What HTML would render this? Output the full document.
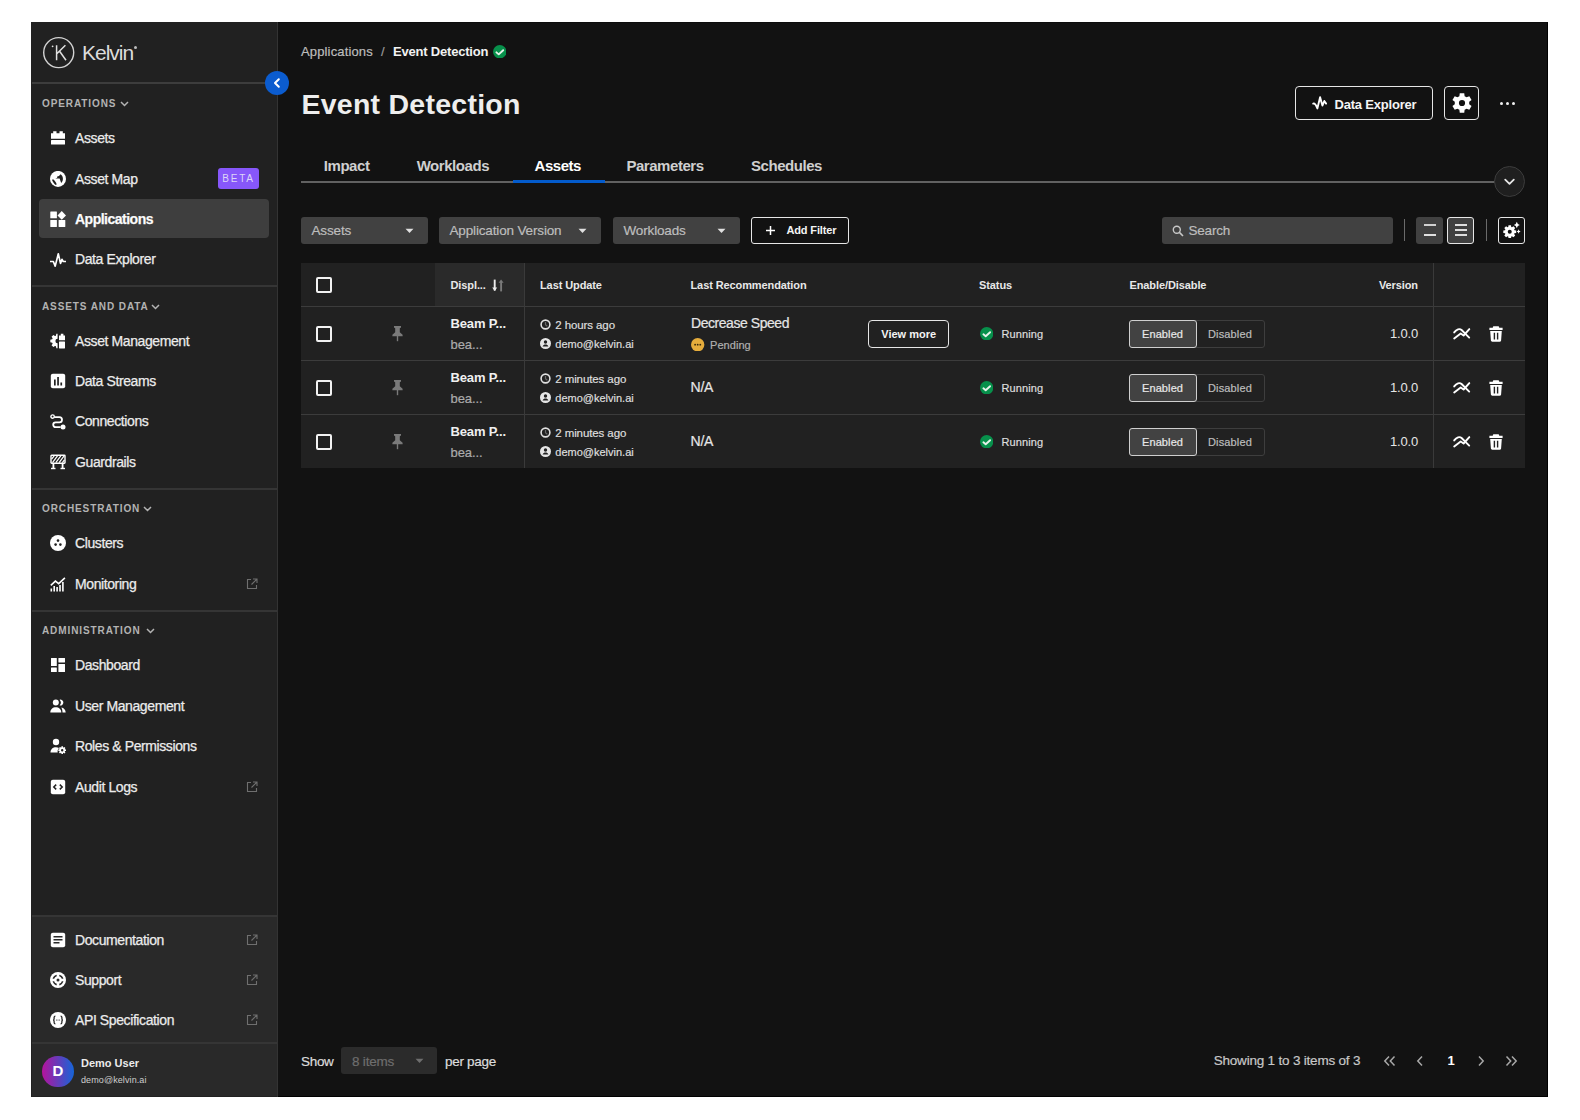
<!DOCTYPE html>
<html><head><meta charset="utf-8">
<style>
*{box-sizing:border-box;margin:0;padding:0}
html,body{width:1580px;height:1120px;background:#fff;overflow:hidden}
body{position:relative;font-family:"Liberation Sans",sans-serif;color:#e8e8e8}
.a{position:absolute}
#frame{position:absolute;left:31px;top:22px;width:1517px;height:1075px;background:#121212;border:1px solid #000;border-top-color:#0c0c0c;border-left-color:#0c0c0c}
#side{position:absolute;left:31px;top:22px;width:247px;height:1075px;background:#212121;border-right:1px solid #333}
#sidebot{position:absolute;left:32px;top:916px;width:245px;height:180px;background:#292929}
.hr{position:absolute;height:1px;background:#3a3a3a}
.sec{position:absolute;left:42px;font-size:10px;font-weight:700;letter-spacing:0.9px;color:#b3b3b3;line-height:1;white-space:nowrap}
.sec svg{position:absolute;top:1.5px}
.item{position:absolute;left:75px;font-size:14px;color:#ececec;line-height:1;letter-spacing:-0.4px;white-space:nowrap;-webkit-text-stroke:0.25px #ececec}
.ico{position:absolute;left:50px;width:16px;height:16px}
.ext{position:absolute;left:246px;width:12px;height:12px}
.t{position:absolute;white-space:nowrap;line-height:1}
</style></head><body>
<div id="frame"></div>
<div id="side"></div>
<div id="sidebot"></div>

<!-- logo -->
<svg class="a" style="left:42px;top:36px" width="34" height="34" viewBox="0 0 34 34"><circle cx="16.7" cy="16.6" r="15" fill="none" stroke="#d2d2d2" stroke-width="1.4"/><path d="M14.6 9.2v15M23.4 9.2l-8.6 8.6M17.6 15.2l6.4 9" stroke="#e0e0e0" stroke-width="1.5" fill="none"/><circle cx="10.6" cy="10.3" r="0.9" fill="#e0e0e0"/></svg>
<div class="t" style="left:82px;top:42px;font-size:21px;color:#dcdcdc;letter-spacing:-1px">Kelvin</div>
<div class="a" style="left:133.5px;top:45.5px;width:3.5px;height:3.5px;border-radius:50%;background:#bbb"></div>
<div class="hr" style="left:32px;top:82px;width:245px;height:2px;background:#3d3d3d"></div>
<!-- collapse btn -->
<div class="a" style="left:265px;top:71px;width:24px;height:24px;border-radius:50%;background:#0b5ccf"></div>
<svg class="a" style="left:265px;top:71px" width="24" height="24" viewBox="0 0 24 24"><path d="M13.8 8.2L10 12l3.8 3.8" stroke="#fff" stroke-width="2" fill="none" stroke-linecap="round" stroke-linejoin="round"/></svg>

<div id="sidenav">
<div class="a" style="left:39px;top:199px;width:230px;height:39px;border-radius:4px;background:#3e3e3e"></div>
<svg class="ico" style="top:130px" viewBox="0 0 16 16" fill="#fff"><path d="M1 3.2h2.2V1.2h3.3v2h3v-2h3.3v2H15v5.6H1z"/><rect x="1" y="10" width="14" height="4.6" rx="0.6"/></svg>
<div class="item" style="top:131px">Assets</div>
<svg class="ico" style="top:170.5px" viewBox="0 0 16 16" fill="#fff"><circle cx="8" cy="7.9" r="8"/><ellipse cx="4.4" cy="11.1" rx="1.05" ry="3.3" transform="rotate(-36 4.4 11.1)" fill="#212121"/><path d="M5.3 7.4h4.3l1.6 4.5c1.2-1.2 1.8-2.6 1.7-4.4-.1-2-1-3.4-2.4-4.2L9 4.9 7.2 5.5v1.3z" fill="#212121"/></svg>
<div class="item" style="top:172px">Asset Map</div>
<svg class="ico" style="top:210.5px" viewBox="0 0 16 16" fill="#fff"><rect x="0.3" y="0.6" width="6.6" height="6.7" rx="0.3"/><rect x="0.3" y="8.9" width="6.6" height="7" rx="0.3"/><rect x="8.6" y="8.9" width="6.7" height="7" rx="0.3"/><path d="M11.75 0.1L16 4.4 11.75 8.7 7.5 4.4z"/></svg>
<div class="item" style="top:212px;font-weight:700;letter-spacing:-0.5px;color:#fff">Applications</div>
<svg class="ico" style="top:251.5px" viewBox="0 0 16 16" fill="#fff"><path d="M0.5 9.5h2.8l1.9 4.6L8.3 1.8l2.2 9.6 1.5-4 1.2 2.1h2.4" fill="none" stroke="#fff" stroke-width="1.7" stroke-linejoin="round" stroke-linecap="round"/></svg>
<div class="item" style="top:252px">Data Explorer</div>
<svg class="ico" style="top:333px" viewBox="0 0 16 16" fill="#fff"><defs><clipPath id="hc"><rect x="0" y="0" width="7.6" height="16"/></clipPath></defs><path clip-path="url(#hc)" fill-rule="evenodd" d="M9.24 2.64 L8.88 0.71 L6.32 0.71 L5.96 2.64 L4.97 3.06 L3.36 1.94 L1.54 3.76 L2.66 5.37 L2.24 6.36 L0.31 6.72 L0.31 9.28 L2.24 9.64 L2.66 10.63 L1.54 12.24 L3.36 14.06 L4.97 12.94 L5.96 13.36 L6.32 15.29 L8.88 15.29 L9.24 13.36 L10.23 12.94 L11.84 14.06 L13.66 12.24 L12.54 10.63 L12.96 9.64 L14.89 9.28 L14.89 6.72 L12.96 6.36 L12.54 5.37 L13.66 3.76 L11.84 1.94 L10.23 3.06Z M9.8 8 A2.2 2.2 0 1 0 5.3999999999999995 8 A2.2 2.2 0 1 0 9.8 8Z"/><path d="M9 2.6h1.8V0.8h2.6v1.8H15v4.6H9z"/><rect x="9" y="8.6" width="6" height="6.8" rx="0.4"/></svg>
<div class="item" style="top:334px">Asset Management</div>
<svg class="ico" style="top:373.3px" viewBox="0 0 16 16" fill="#fff"><rect x="0.8" y="0.8" width="14.4" height="14.4" rx="2"/><rect x="4" y="6.5" width="1.7" height="6" fill="#212121"/><rect x="7.2" y="4" width="1.7" height="8.5" fill="#212121"/><rect x="10.4" y="9.5" width="1.7" height="3" fill="#212121"/></svg>
<div class="item" style="top:374px">Data Streams</div>
<svg class="ico" style="top:413.5px" viewBox="0 0 16 16" fill="#fff"><circle cx="2.6" cy="2.6" r="1.7" fill="none" stroke="#fff" stroke-width="1.4"/><circle cx="13" cy="13" r="2.5"/><path d="M4.2 3.2h5.2a2.6 2.6 0 0 1 0 5.2H5.6a2.4 2.4 0 0 0 0 4.8h5" fill="none" stroke="#fff" stroke-width="1.8"/></svg>
<div class="item" style="top:414px">Connections</div>
<svg class="ico" style="top:454px" viewBox="0 0 16 16" fill="#fff"><rect x="1" y="1.2" width="14" height="8" rx="0.6" fill="none" stroke="#fff" stroke-width="1.4"/><path d="M2.5 8.6l5-6.8M5.8 8.6l5-6.8M9.1 8.6l5-6.8M1.6 5.2l2.6-3.4M12.4 8.6l2-2.8" stroke="#fff" stroke-width="1.2"/><rect x="2.5" y="9" width="1.8" height="6"/><rect x="11.7" y="9" width="1.8" height="6"/><rect x="1" y="13.8" width="4.5" height="1.4"/><rect x="10.5" y="13.8" width="4.5" height="1.4"/></svg>
<div class="item" style="top:455px">Guardrails</div>
<svg class="ico" style="top:535px" viewBox="0 0 16 16" fill="#fff"><circle cx="8" cy="8" r="8"/><circle cx="8" cy="5.6" r="1.3" fill="#212121"/><circle cx="5.6" cy="9.6" r="1.3" fill="#212121"/><circle cx="10.4" cy="9.6" r="1.3" fill="#212121"/></svg>
<div class="item" style="top:536px">Clusters</div>
<svg class="ico" style="top:575.7px" viewBox="0 0 16 16" fill="#fff"><path d="M0.8 9.4l4.6-4.3 3.3 2.6 6.2-5.8" fill="none" stroke="#fff" stroke-width="1.6"/><rect x="0.5" y="12.5" width="1.6" height="3"/><rect x="3.4" y="10" width="1.6" height="5.5"/><rect x="6.3" y="11" width="1.6" height="4.5"/><rect x="9.2" y="9" width="1.6" height="6.5"/><rect x="12.1" y="6" width="1.6" height="9.5"/></svg>
<div class="item" style="top:577px">Monitoring</div>
<svg class="ext" style="top:577.7px" width="12" height="12" viewBox="0 0 12 12"><path d="M5 1.5H1.5v9h9V7" fill="none" stroke="#6f6f6f" stroke-width="1.1"/><path d="M7 1h4v4M11 1L5.5 6.5" fill="none" stroke="#6f6f6f" stroke-width="1.1"/></svg>
<svg class="ico" style="top:657.4px" viewBox="0 0 16 16" fill="#fff"><rect x="1" y="1" width="5.8" height="8" rx="0.3"/><rect x="1" y="10.6" width="5.8" height="4.4" rx="0.3"/><rect x="8.4" y="1" width="6.6" height="4.4" rx="0.3"/><rect x="8.4" y="7" width="6.6" height="8" rx="0.3"/></svg>
<div class="item" style="top:658px">Dashboard</div>
<svg class="ico" style="top:697.9px" viewBox="0 0 16 16" fill="#fff"><circle cx="5.8" cy="4.6" r="3"/><path d="M0.3 14.6c0-3.3 2.4-5.3 5.5-5.3s5.5 2 5.5 5.3z"/><path d="M9.6 1.7a3 3 0 1 1 0 5.8 4.3 4.3 0 0 0 0-5.8zM11.4 9.5c2.5.5 4.3 2.2 4.3 5.1h-3.2c0-2-.4-3.6-1.1-5.1z"/></svg>
<div class="item" style="top:699px">User Management</div>
<svg class="ico" style="top:738.4px" viewBox="0 0 16 16" fill="#fff"><circle cx="6" cy="4" r="3.2"/><path d="M0.5 14.5c0-3.4 2.4-5.3 5.5-5.3 1.1 0 2.1.2 3 .7-.9.9-1.4 2.3-1.4 3.6 0 .3 0 .7.1 1z"/><path fill-rule="evenodd" d="M13.10 9.44 L12.94 8.37 L11.46 8.37 L11.30 9.44 L10.88 9.62 L10.02 8.97 L8.97 10.02 L9.62 10.88 L9.44 11.30 L8.37 11.46 L8.37 12.94 L9.44 13.10 L9.62 13.52 L8.97 14.38 L10.02 15.43 L10.88 14.78 L11.30 14.96 L11.46 16.03 L12.94 16.03 L13.10 14.96 L13.52 14.78 L14.38 15.43 L15.43 14.38 L14.78 13.52 L14.96 13.10 L16.03 12.94 L16.03 11.46 L14.96 11.30 L14.78 10.88 L15.43 10.02 L14.38 8.97 L13.52 9.62Z M13.399999999999999 12.2 A1.2 1.2 0 1 0 11.0 12.2 A1.2 1.2 0 1 0 13.399999999999999 12.2Z"/></svg>
<div class="item" style="top:739px">Roles &amp; Permissions</div>
<svg class="ico" style="top:778.8px" viewBox="0 0 16 16" fill="#fff"><rect x="0.8" y="0.8" width="14.4" height="14.4" rx="2"/><path d="M6.2 5.6L3.8 8l2.4 2.4M9.8 5.6L12.2 8l-2.4 2.4" fill="none" stroke="#212121" stroke-width="1.5"/></svg>
<div class="item" style="top:780px">Audit Logs</div>
<svg class="ext" style="top:780.8px" width="12" height="12" viewBox="0 0 12 12"><path d="M5 1.5H1.5v9h9V7" fill="none" stroke="#6f6f6f" stroke-width="1.1"/><path d="M7 1h4v4M11 1L5.5 6.5" fill="none" stroke="#6f6f6f" stroke-width="1.1"/></svg>
<svg class="ico" style="top:932px" viewBox="0 0 16 16" fill="#fff"><rect x="0.8" y="0.8" width="14.4" height="14.4" rx="2"/><rect x="3.5" y="4" width="9" height="1.5" fill="#292929"/><rect x="3.5" y="7" width="9" height="1.5" fill="#292929"/><rect x="3.5" y="10" width="6" height="1.5" fill="#292929"/></svg>
<div class="item" style="top:933px">Documentation</div>
<svg class="ext" style="top:934px" width="12" height="12" viewBox="0 0 12 12"><path d="M5 1.5H1.5v9h9V7" fill="none" stroke="#6f6f6f" stroke-width="1.1"/><path d="M7 1h4v4M11 1L5.5 6.5" fill="none" stroke="#6f6f6f" stroke-width="1.1"/></svg>
<svg class="ico" style="top:972px" viewBox="0 0 16 16" fill="#fff"><circle cx="8" cy="8" r="8"/><circle cx="8" cy="8" r="4.7" fill="none" stroke="#292929" stroke-width="1.7"/><path d="M8 1.5v13M1.5 8h13" stroke="#fff" stroke-width="2.6"/><circle cx="8" cy="8" r="1.5" fill="#292929"/></svg>
<div class="item" style="top:973px">Support</div>
<svg class="ext" style="top:974px" width="12" height="12" viewBox="0 0 12 12"><path d="M5 1.5H1.5v9h9V7" fill="none" stroke="#6f6f6f" stroke-width="1.1"/><path d="M7 1h4v4M11 1L5.5 6.5" fill="none" stroke="#6f6f6f" stroke-width="1.1"/></svg>
<svg class="ico" style="top:1012px" viewBox="0 0 16 16" fill="#fff"><circle cx="8" cy="8" r="8"/><path d="M5.4 4.2c-1.2 0-1.3.6-1.3 1.6v.9c0 .8-.4 1.3-1 1.3.6 0 1 .5 1 1.3v.9c0 1 .1 1.6 1.3 1.6M10.6 4.2c1.2 0 1.3.6 1.3 1.6v.9c0 .8.4 1.3 1 1.3-.6 0-1 .5-1 1.3v.9c0 1-.1 1.6-1.3 1.6" fill="none" stroke="#292929" stroke-width="1.3"/><circle cx="6.4" cy="8" r=".55" fill="#292929"/><circle cx="8" cy="8" r=".55" fill="#292929"/><circle cx="9.6" cy="8" r=".55" fill="#292929"/></svg>
<div class="item" style="top:1013px">API Specification</div>
<svg class="ext" style="top:1014px" width="12" height="12" viewBox="0 0 12 12"><path d="M5 1.5H1.5v9h9V7" fill="none" stroke="#6f6f6f" stroke-width="1.1"/><path d="M7 1h4v4M11 1L5.5 6.5" fill="none" stroke="#6f6f6f" stroke-width="1.1"/></svg>
<div class="a" style="left:218px;top:168px;width:41px;height:21px;border-radius:3px;background:#8757fa;color:#ddd5f7;font-size:10px;font-weight:400;letter-spacing:1.75px;line-height:22px;text-align:center;padding-left:0px">BETA</div>
<div class="sec" style="top:99px">OPERATIONS<svg width="9" height="6" viewBox="0 0 9 6" style="left:78px"><path d="M1 1l3.5 3.5L8 1" fill="none" stroke="#b3b3b3" stroke-width="1.5"/></svg></div>
<div class="sec" style="top:302px">ASSETS AND DATA<svg width="9" height="6" viewBox="0 0 9 6" style="left:109px"><path d="M1 1l3.5 3.5L8 1" fill="none" stroke="#b3b3b3" stroke-width="1.5"/></svg></div>
<div class="sec" style="top:504px">ORCHESTRATION<svg width="9" height="6" viewBox="0 0 9 6" style="left:101px"><path d="M1 1l3.5 3.5L8 1" fill="none" stroke="#b3b3b3" stroke-width="1.5"/></svg></div>
<div class="sec" style="top:626px">ADMINISTRATION<svg width="9" height="6" viewBox="0 0 9 6" style="left:104px"><path d="M1 1l3.5 3.5L8 1" fill="none" stroke="#b3b3b3" stroke-width="1.5"/></svg></div>
<div class="hr" style="left:32px;top:285px;width:245px;height:2px;background:#353535"></div>
<div class="hr" style="left:32px;top:488px;width:245px;height:2px;background:#353535"></div>
<div class="hr" style="left:32px;top:610px;width:245px;height:2px;background:#353535"></div>
<div class="hr" style="left:32px;top:915px;width:245px;height:2px;background:#353535"></div>
<div class="hr" style="left:32px;top:1042px;width:245px;height:2px;background:#353535"></div>
<div class="a" style="left:42.2px;top:1055.5px;width:31.5px;height:31.5px;border-radius:50%;background:linear-gradient(90deg,#b5139c,#1565d8)"></div>
<div class="t" style="left:42.2px;width:31.5px;text-align:center;top:1063px;font-size:15px;font-weight:700;color:#fff">D</div>
<div class="t" style="left:81px;top:1058px;font-size:11px;font-weight:700;color:#ececec;letter-spacing:0px">Demo User</div>
<div class="t" style="left:81px;top:1076px;font-size:9px;color:#cfcfcf;letter-spacing:0.1px">demo@kelvin.ai</div>
</div>

<div id="main">
<div class="t" style="left:301px;top:45px;font-size:13px;color:#bdbdbd;font-weight:400;letter-spacing:0.15px;-webkit-text-stroke:0.2px #bdbdbd;">Applications</div>
<div class="t" style="left:381px;top:45px;font-size:13px;color:#9a9a9a;font-weight:400;letter-spacing:0px;-webkit-text-stroke:0.2px #9a9a9a;">/</div>
<div class="t" style="left:393px;top:45px;font-size:13px;color:#f2f2f2;font-weight:700;letter-spacing:-0.2px;">Event Detection</div>
<svg class="a" style="left:492.9px;top:44.9px" width="13.5" height="13.5" viewBox="0 0 13.4 13.4"><circle cx="6.7" cy="6.7" r="6.7" fill="#07904b"/><path d="M3.4 7.3l2.3 2 4.4-4.1" fill="none" stroke="#e6f2ea" stroke-width="1.9" stroke-linecap="round" stroke-linejoin="round"/></svg>
<div class="t" style="left:301.5px;top:90px;font-size:28.5px;color:#eeeeee;font-weight:700;letter-spacing:0.25px;">Event Detection</div>
<div class="a" style="left:1295px;top:86px;width:138px;height:34px;border:1.5px solid #e6e6e6;border-radius:4px"></div>
<svg class="a" style="left:1311px;top:95px" width="17" height="17" viewBox="0 0 17 17"><path d="M2.2 8.6c1.6-.6 2.6.6 4.2 4.8L9.1 2.2l2.3 8.4 1.9-4.6 1.8 2.6" fill="none" stroke="#fff" stroke-width="1.9" stroke-linejoin="round" stroke-linecap="round"/></svg>
<div class="t" style="left:1334.5px;top:98px;font-size:13px;color:#f4f4f4;font-weight:700;letter-spacing:-0.2px;">Data Explorer</div>
<div class="a" style="left:1444px;top:86px;width:35px;height:34px;border:1.5px solid #e6e6e6;border-radius:4px"></div>
<svg class="a" style="left:1451.8px;top:93.4px" width="20" height="20" viewBox="0 0 20 20"><path fill="#fff" fill-rule="evenodd" d="M12.62 3.18 L12.25 0.26 L7.75 0.26 L7.38 3.18 L5.41 4.33 L2.69 3.18 L0.44 7.08 L2.79 8.86 L2.79 11.14 L0.44 12.92 L2.69 16.82 L5.41 15.67 L7.38 16.82 L7.75 19.74 L12.25 19.74 L12.62 16.82 L14.59 15.67 L17.31 16.82 L19.56 12.92 L17.21 11.14 L17.21 8.86 L19.56 7.08 L17.31 3.18 L14.59 4.33Z M13.1 10 A3.1 3.1 0 1 0 6.9 10 A3.1 3.1 0 1 0 13.1 10Z"/></svg>
<div class="a" style="left:1499.6px;top:101.6px;width:3.8px;height:3.8px;border-radius:50%;background:#f0f0f0"></div>
<div class="a" style="left:1505.6px;top:101.6px;width:3.8px;height:3.8px;border-radius:50%;background:#f0f0f0"></div>
<div class="a" style="left:1511.6px;top:101.6px;width:3.8px;height:3.8px;border-radius:50%;background:#f0f0f0"></div>
<div class="t" style="left:323.8px;top:158px;font-size:15px;color:#cfcfcf;font-weight:700;letter-spacing:-0.45px;">Impact</div>
<div class="t" style="left:416.7px;top:158px;font-size:15px;color:#cfcfcf;font-weight:700;letter-spacing:-0.45px;">Workloads</div>
<div class="t" style="left:534.5px;top:158px;font-size:15px;color:#ffffff;font-weight:700;letter-spacing:-0.45px;">Assets</div>
<div class="t" style="left:626.4px;top:158px;font-size:15px;color:#cfcfcf;font-weight:700;letter-spacing:-0.45px;">Parameters</div>
<div class="t" style="left:751px;top:158px;font-size:15px;color:#cfcfcf;font-weight:700;letter-spacing:-0.45px;">Schedules</div>
<div class="a" style="left:301px;top:181px;width:1194px;height:2px;background:#616161"></div>
<div class="a" style="left:513px;top:179.5px;width:92px;height:3px;background:#035bcc"></div>
<div class="a" style="left:1494px;top:166px;width:31px;height:31px;border-radius:50%;background:#1f1f1f;border:1px solid #3c3c3c"></div>
<svg class="a" style="left:1502px;top:175px" width="15" height="13" viewBox="0 0 15 13"><path d="M3.2 4.6l4.3 4.2 4.3-4.2" fill="none" stroke="#e6e6e6" stroke-width="1.8" stroke-linecap="round" stroke-linejoin="round"/></svg>
<div class="a" style="left:301px;top:217px;width:127px;height:27px;border-radius:3px;background:#414141"></div>
<div class="t" style="left:311.5px;top:224px;font-size:13.5px;color:#bdbdbd;font-weight:400;letter-spacing:-0.15px;-webkit-text-stroke:0.2px #bdbdbd;">Assets</div>
<svg class="a" style="left:404.5px;top:227.5px" width="9" height="6" viewBox="0 0 9 6"><path d="M0.5 0.8h8L4.5 5z" fill="#e0e0e0"/></svg>
<div class="a" style="left:439px;top:217px;width:162px;height:27px;border-radius:3px;background:#414141"></div>
<div class="t" style="left:449.5px;top:224px;font-size:13.5px;color:#bdbdbd;font-weight:400;letter-spacing:-0.15px;-webkit-text-stroke:0.2px #bdbdbd;">Application Version</div>
<svg class="a" style="left:577.5px;top:227.5px" width="9" height="6" viewBox="0 0 9 6"><path d="M0.5 0.8h8L4.5 5z" fill="#e0e0e0"/></svg>
<div class="a" style="left:613px;top:217px;width:127px;height:27px;border-radius:3px;background:#414141"></div>
<div class="t" style="left:623.5px;top:224px;font-size:13.5px;color:#bdbdbd;font-weight:400;letter-spacing:-0.15px;-webkit-text-stroke:0.2px #bdbdbd;">Workloads</div>
<svg class="a" style="left:716.5px;top:227.5px" width="9" height="6" viewBox="0 0 9 6"><path d="M0.5 0.8h8L4.5 5z" fill="#e0e0e0"/></svg>
<div class="a" style="left:751px;top:217px;width:98px;height:27px;border:1.5px solid #e6e6e6;border-radius:3px"></div>
<svg class="a" style="left:765px;top:225px" width="11" height="11" viewBox="0 0 11 11"><path d="M5.5 1v9M1 5.5h9" stroke="#fff" stroke-width="1.5"/></svg>
<div class="t" style="left:786.5px;top:225px;font-size:11px;color:#f4f4f4;font-weight:700;letter-spacing:-0.15px;">Add Filter</div>
<div class="a" style="left:1162px;top:217px;width:231px;height:27px;border-radius:3px;background:#414141"></div>
<svg class="a" style="left:1172px;top:224.5px" width="12" height="12" viewBox="0 0 12 12"><circle cx="4.8" cy="4.8" r="3.5" fill="none" stroke="#c8c8c8" stroke-width="1.4"/><path d="M7.4 7.4l3.6 3.6" stroke="#c8c8c8" stroke-width="1.6"/></svg>
<div class="t" style="left:1188.5px;top:224px;font-size:13.5px;color:#bdbdbd;font-weight:400;letter-spacing:-0.2px;-webkit-text-stroke:0.2px #bdbdbd;">Search</div>
<div class="a" style="left:1404px;top:219px;width:1px;height:22px;background:#6a6a6a"></div>
<div class="a" style="left:1416px;top:217px;width:27px;height:27px;border-radius:3px;background:#414141"></div>
<div class="a" style="left:1424px;top:224.1px;width:12px;height:2px;background:#d0d0d0"></div><div class="a" style="left:1424px;top:234.4px;width:12px;height:2px;background:#e0e0e0"></div>
<div class="a" style="left:1447px;top:216.7px;width:27px;height:27.2px;border-radius:3px;border:1.6px solid #e6e6e6;background:#404040"></div>
<div class="a" style="left:1455px;top:224.1px;width:12px;height:2px;background:#dedede"></div>
<div class="a" style="left:1455px;top:229.3px;width:12px;height:2px;background:#dedede"></div>
<div class="a" style="left:1455px;top:234.4px;width:12px;height:2px;background:#dedede"></div>
<div class="a" style="left:1486px;top:219px;width:1px;height:22px;background:#6a6a6a"></div>
<div class="a" style="left:1498px;top:217px;width:27px;height:27px;border-radius:3px;border:1.5px solid #e6e6e6"></div>
<svg class="a" style="left:1503.1px;top:224.8px" width="13.5" height="13.5" viewBox="0 0 14 14"><path fill="#fff" fill-rule="evenodd" d="M8.58 2.15 L8.30 0.32 L5.70 0.32 L5.42 2.15 L4.68 2.46 L3.20 1.36 L1.36 3.20 L2.46 4.68 L2.15 5.42 L0.32 5.70 L0.32 8.30 L2.15 8.58 L2.46 9.32 L1.36 10.80 L3.20 12.64 L4.68 11.54 L5.42 11.85 L5.70 13.68 L8.30 13.68 L8.58 11.85 L9.32 11.54 L10.80 12.64 L12.64 10.80 L11.54 9.32 L11.85 8.58 L13.68 8.30 L13.68 5.70 L11.85 5.42 L11.54 4.68 L12.64 3.20 L10.80 1.36 L9.32 2.46Z M9.1 7 A2.1 2.1 0 1 0 4.9 7 A2.1 2.1 0 1 0 9.1 7Z"/></svg><svg class="a" style="left:1513px;top:221px" width="8" height="14" viewBox="0 0 8 14"><path d="M3.8 0.8Q4.3 3.5 6.8 4 4.3 4.5 3.8 7.2 3.3 4.5 0.8 4 3.3 3.5 3.8 0.8z" fill="#fff"/><path d="M5.6 8.3Q5.9 10.2 7.6 10.5 5.9 10.8 5.6 12.7 5.3 10.8 3.6 10.5 5.3 10.2 5.6 8.3z" fill="#fff"/></svg>
<div class="a" style="left:301px;top:263px;width:1224px;height:205px;background:#212121"></div>
<div class="a" style="left:435px;top:263px;width:89px;height:43px;background:#2a2a2a"></div>
<div class="a" style="left:301px;top:306px;width:1224px;height:1px;background:#3c3c3c"></div>
<div class="a" style="left:301px;top:360px;width:1224px;height:1px;background:#3c3c3c"></div>
<div class="a" style="left:301px;top:414px;width:1224px;height:1px;background:#3c3c3c"></div>
<div class="a" style="left:523.5px;top:263px;width:1px;height:205px;background:#3a3a3a"></div>
<div class="a" style="left:1433px;top:263px;width:1px;height:205px;background:#3a3a3a"></div>
<div class="a" style="left:316px;top:277px;width:16px;height:16px;border:2px solid #f2f2f2;border-radius:2px"></div>
<div class="t" style="left:450.5px;top:280px;font-size:11px;color:#e8e8e8;font-weight:700;letter-spacing:-0.1px;">Displ...</div>
<svg class="a" style="left:491px;top:278.5px" width="13" height="13" viewBox="0 0 13 13"><path d="M3.7 0.6v11" stroke="#ececec" stroke-width="1.9"/><path d="M1.2 8.6h5l-2.5 3.4z" fill="#ececec"/><path d="M10.1 12.4v-10" stroke="#7a7a7a" stroke-width="1.9"/><path d="M7.6 3.8h5L10.1 0.6z" fill="#7a7a7a"/></svg>
<div class="t" style="left:540px;top:280px;font-size:11px;color:#e8e8e8;font-weight:700;letter-spacing:-0.1px;">Last Update</div>
<div class="t" style="left:690.5px;top:280px;font-size:11px;color:#e8e8e8;font-weight:700;letter-spacing:-0.1px;">Last Recommendation</div>
<div class="t" style="left:979px;top:280px;font-size:11px;color:#e8e8e8;font-weight:700;letter-spacing:-0.1px;">Status</div>
<div class="t" style="left:1129.5px;top:280px;font-size:11px;color:#e8e8e8;font-weight:700;letter-spacing:-0.1px;">Enable/Disable</div>
<div class="t" style="left:1318px;width:100px;text-align:right;top:280px;font-size:11px;color:#e8e8e8;font-weight:700;letter-spacing:-0.1px">Version</div>
<div class="a" style="left:316px;top:326px;width:16px;height:16px;border:2px solid #f2f2f2;border-radius:2px"></div>
<svg class="a" style="left:390.5px;top:324.5px" width="13" height="17" viewBox="0 0 13 17"><path d="M3 1h7v1.4L8.8 3.2v4l2.8 2.6v1.4H1.4V9.8l2.8-2.6v-4L3 2.4z" fill="#7a7a7a"/><rect x="5.8" y="11" width="1.4" height="5.2" fill="#7a7a7a"/></svg>
<div class="t" style="left:450.5px;top:317px;font-size:13px;color:#f0f0f0;font-weight:700;letter-spacing:-0.15px;">Beam P...</div>
<div class="t" style="left:450.5px;top:338px;font-size:13px;color:#ababab;font-weight:400;letter-spacing:-0.1px;-webkit-text-stroke:0.2px #ababab;">bea...</div>
<svg class="a" style="left:540px;top:319px" width="11" height="11" viewBox="0 0 11 11"><circle cx="5.5" cy="5.5" r="4.4" fill="none" stroke="#e0e0e0" stroke-width="1.6"/><path d="M5.5 3v2.7l1.8 1.5" fill="none" stroke="#6a6a6a" stroke-width="1.2"/></svg>
<div class="t" style="left:555.3px;top:320px;font-size:11.5px;color:#dedede;font-weight:400;letter-spacing:-0.1px;-webkit-text-stroke:0.2px #dedede;">2 hours ago</div>
<svg class="a" style="left:540px;top:338px" width="11" height="11" viewBox="0 0 11 11"><circle cx="5.5" cy="5.5" r="5.5" fill="#e6e6e6"/><circle cx="5.5" cy="4" r="1.7" fill="#212121"/><path d="M2.6 8.6c.6-1.4 1.6-2 2.9-2s2.3.6 2.9 2z" fill="#212121"/></svg>
<div class="t" style="left:555.3px;top:339px;font-size:11px;color:#dedede;font-weight:400;letter-spacing:0px;-webkit-text-stroke:0.2px #dedede;">demo@kelvin.ai</div>
<div class="t" style="left:691px;top:316px;font-size:14px;color:#e6e6e6;font-weight:400;letter-spacing:-0.45px;-webkit-text-stroke:0.2px #e6e6e6;">Decrease Speed</div>
<svg class="a" style="left:691.2px;top:337.5px" width="13.4" height="13.4" viewBox="0 0 14 14"><circle cx="7" cy="7" r="7" fill="#e6ad3c"/><circle cx="4.3" cy="7" r=".95" fill="#3a2a0a"/><circle cx="7" cy="7" r=".95" fill="#3a2a0a"/><circle cx="9.7" cy="7" r=".95" fill="#3a2a0a"/></svg>
<div class="t" style="left:710px;top:340px;font-size:11px;color:#b0b0b0;font-weight:400;letter-spacing:0.05px;-webkit-text-stroke:0.2px #b0b0b0;">Pending</div>
<div class="a" style="left:868px;top:320px;width:81px;height:27.5px;border:1.5px solid #e6e6e6;border-radius:4px"></div>
<div class="t" style="left:881.3px;top:329px;font-size:11px;color:#f4f4f4;font-weight:700;letter-spacing:0px;">View more</div>
<svg class="a" style="left:979.6px;top:327px" width="13.4" height="13.4" viewBox="0 0 13.4 13.4"><circle cx="6.7" cy="6.7" r="6.7" fill="#07904b"/><path d="M3.4 7.3l2.3 2 4.4-4.1" fill="none" stroke="#e6f2ea" stroke-width="1.9" stroke-linecap="round" stroke-linejoin="round"/></svg>
<div class="t" style="left:1001.5px;top:329px;font-size:11px;color:#dedede;font-weight:400;letter-spacing:0.1px;-webkit-text-stroke:0.2px #dedede;">Running</div>
<div class="a" style="left:1129px;top:319.5px;width:136px;height:28px;border:1px solid #3e3e3e;border-radius:3px"></div>
<div class="a" style="left:1129px;top:319.5px;width:67.5px;height:28px;border:1.5px solid #cfcfcf;border-radius:3px;background:#424242"></div>
<div class="t" style="left:1142px;top:329px;font-size:11px;color:#e8e8e8;font-weight:400;letter-spacing:0.1px;-webkit-text-stroke:0.2px #e8e8e8;">Enabled</div>
<div class="t" style="left:1208px;top:329px;font-size:11px;color:#bdbdbd;font-weight:400;letter-spacing:0.15px;-webkit-text-stroke:0.2px #bdbdbd;">Disabled</div>
<div class="t" style="left:1368px;width:50px;text-align:right;top:327px;font-size:13px;color:#e6e6e6;letter-spacing:-0.2px">1.0.0</div>
<svg class="a" style="left:1452px;top:326px" width="19" height="15" viewBox="0 0 19 15"><path d="M2.2 6.4C4.6 3.2 7.6 2.2 9.6 4L17.2 11.6" fill="none" stroke="#fff" stroke-width="1.9" stroke-linecap="round"/><path d="M2.2 12.4L8.7 7.4l2.9 2.1 5.7-6.4" fill="none" stroke="#fff" stroke-width="1.9" stroke-linecap="round" stroke-linejoin="round"/></svg>
<svg class="a" style="left:1489px;top:326.4px" width="14" height="16" viewBox="0 0 14 16"><path d="M4.3 0.3h5.4l.6 1.4h3.3v2.4H0.4V1.7h3.3zM1.2 4.9h11.6l-.7 9.6c-.1.8-.6 1.2-1.4 1.2H3.3c-.8 0-1.3-.4-1.4-1.2z" fill="#fff"/><path d="M5.4 6.8v6.8M8.6 6.8v6.8" stroke="#212121" stroke-width="1.4"/></svg>
<div class="a" style="left:316px;top:380px;width:16px;height:16px;border:2px solid #f2f2f2;border-radius:2px"></div>
<svg class="a" style="left:390.5px;top:378.5px" width="13" height="17" viewBox="0 0 13 17"><path d="M3 1h7v1.4L8.8 3.2v4l2.8 2.6v1.4H1.4V9.8l2.8-2.6v-4L3 2.4z" fill="#7a7a7a"/><rect x="5.8" y="11" width="1.4" height="5.2" fill="#7a7a7a"/></svg>
<div class="t" style="left:450.5px;top:371px;font-size:13px;color:#f0f0f0;font-weight:700;letter-spacing:-0.15px;">Beam P...</div>
<div class="t" style="left:450.5px;top:392px;font-size:13px;color:#ababab;font-weight:400;letter-spacing:-0.1px;-webkit-text-stroke:0.2px #ababab;">bea...</div>
<svg class="a" style="left:540px;top:373px" width="11" height="11" viewBox="0 0 11 11"><circle cx="5.5" cy="5.5" r="4.4" fill="none" stroke="#e0e0e0" stroke-width="1.6"/><path d="M5.5 3v2.7l1.8 1.5" fill="none" stroke="#6a6a6a" stroke-width="1.2"/></svg>
<div class="t" style="left:555.3px;top:374px;font-size:11.5px;color:#dedede;font-weight:400;letter-spacing:-0.1px;-webkit-text-stroke:0.2px #dedede;">2 minutes ago</div>
<svg class="a" style="left:540px;top:392px" width="11" height="11" viewBox="0 0 11 11"><circle cx="5.5" cy="5.5" r="5.5" fill="#e6e6e6"/><circle cx="5.5" cy="4" r="1.7" fill="#212121"/><path d="M2.6 8.6c.6-1.4 1.6-2 2.9-2s2.3.6 2.9 2z" fill="#212121"/></svg>
<div class="t" style="left:555.3px;top:393px;font-size:11px;color:#dedede;font-weight:400;letter-spacing:0px;-webkit-text-stroke:0.2px #dedede;">demo@kelvin.ai</div>
<div class="t" style="left:690.5px;top:380px;font-size:14px;color:#e6e6e6;font-weight:400;letter-spacing:-0.2px;-webkit-text-stroke:0.2px #e6e6e6;">N/A</div>
<svg class="a" style="left:979.6px;top:381px" width="13.4" height="13.4" viewBox="0 0 13.4 13.4"><circle cx="6.7" cy="6.7" r="6.7" fill="#07904b"/><path d="M3.4 7.3l2.3 2 4.4-4.1" fill="none" stroke="#e6f2ea" stroke-width="1.9" stroke-linecap="round" stroke-linejoin="round"/></svg>
<div class="t" style="left:1001.5px;top:383px;font-size:11px;color:#dedede;font-weight:400;letter-spacing:0.1px;-webkit-text-stroke:0.2px #dedede;">Running</div>
<div class="a" style="left:1129px;top:373.5px;width:136px;height:28px;border:1px solid #3e3e3e;border-radius:3px"></div>
<div class="a" style="left:1129px;top:373.5px;width:67.5px;height:28px;border:1.5px solid #cfcfcf;border-radius:3px;background:#424242"></div>
<div class="t" style="left:1142px;top:383px;font-size:11px;color:#e8e8e8;font-weight:400;letter-spacing:0.1px;-webkit-text-stroke:0.2px #e8e8e8;">Enabled</div>
<div class="t" style="left:1208px;top:383px;font-size:11px;color:#bdbdbd;font-weight:400;letter-spacing:0.15px;-webkit-text-stroke:0.2px #bdbdbd;">Disabled</div>
<div class="t" style="left:1368px;width:50px;text-align:right;top:381px;font-size:13px;color:#e6e6e6;letter-spacing:-0.2px">1.0.0</div>
<svg class="a" style="left:1452px;top:380px" width="19" height="15" viewBox="0 0 19 15"><path d="M2.2 6.4C4.6 3.2 7.6 2.2 9.6 4L17.2 11.6" fill="none" stroke="#fff" stroke-width="1.9" stroke-linecap="round"/><path d="M2.2 12.4L8.7 7.4l2.9 2.1 5.7-6.4" fill="none" stroke="#fff" stroke-width="1.9" stroke-linecap="round" stroke-linejoin="round"/></svg>
<svg class="a" style="left:1489px;top:380.4px" width="14" height="16" viewBox="0 0 14 16"><path d="M4.3 0.3h5.4l.6 1.4h3.3v2.4H0.4V1.7h3.3zM1.2 4.9h11.6l-.7 9.6c-.1.8-.6 1.2-1.4 1.2H3.3c-.8 0-1.3-.4-1.4-1.2z" fill="#fff"/><path d="M5.4 6.8v6.8M8.6 6.8v6.8" stroke="#212121" stroke-width="1.4"/></svg>
<div class="a" style="left:316px;top:434px;width:16px;height:16px;border:2px solid #f2f2f2;border-radius:2px"></div>
<svg class="a" style="left:390.5px;top:432.5px" width="13" height="17" viewBox="0 0 13 17"><path d="M3 1h7v1.4L8.8 3.2v4l2.8 2.6v1.4H1.4V9.8l2.8-2.6v-4L3 2.4z" fill="#7a7a7a"/><rect x="5.8" y="11" width="1.4" height="5.2" fill="#7a7a7a"/></svg>
<div class="t" style="left:450.5px;top:425px;font-size:13px;color:#f0f0f0;font-weight:700;letter-spacing:-0.15px;">Beam P...</div>
<div class="t" style="left:450.5px;top:446px;font-size:13px;color:#ababab;font-weight:400;letter-spacing:-0.1px;-webkit-text-stroke:0.2px #ababab;">bea...</div>
<svg class="a" style="left:540px;top:427px" width="11" height="11" viewBox="0 0 11 11"><circle cx="5.5" cy="5.5" r="4.4" fill="none" stroke="#e0e0e0" stroke-width="1.6"/><path d="M5.5 3v2.7l1.8 1.5" fill="none" stroke="#6a6a6a" stroke-width="1.2"/></svg>
<div class="t" style="left:555.3px;top:428px;font-size:11.5px;color:#dedede;font-weight:400;letter-spacing:-0.1px;-webkit-text-stroke:0.2px #dedede;">2 minutes ago</div>
<svg class="a" style="left:540px;top:446px" width="11" height="11" viewBox="0 0 11 11"><circle cx="5.5" cy="5.5" r="5.5" fill="#e6e6e6"/><circle cx="5.5" cy="4" r="1.7" fill="#212121"/><path d="M2.6 8.6c.6-1.4 1.6-2 2.9-2s2.3.6 2.9 2z" fill="#212121"/></svg>
<div class="t" style="left:555.3px;top:447px;font-size:11px;color:#dedede;font-weight:400;letter-spacing:0px;-webkit-text-stroke:0.2px #dedede;">demo@kelvin.ai</div>
<div class="t" style="left:690.5px;top:434px;font-size:14px;color:#e6e6e6;font-weight:400;letter-spacing:-0.2px;-webkit-text-stroke:0.2px #e6e6e6;">N/A</div>
<svg class="a" style="left:979.6px;top:435px" width="13.4" height="13.4" viewBox="0 0 13.4 13.4"><circle cx="6.7" cy="6.7" r="6.7" fill="#07904b"/><path d="M3.4 7.3l2.3 2 4.4-4.1" fill="none" stroke="#e6f2ea" stroke-width="1.9" stroke-linecap="round" stroke-linejoin="round"/></svg>
<div class="t" style="left:1001.5px;top:437px;font-size:11px;color:#dedede;font-weight:400;letter-spacing:0.1px;-webkit-text-stroke:0.2px #dedede;">Running</div>
<div class="a" style="left:1129px;top:427.5px;width:136px;height:28px;border:1px solid #3e3e3e;border-radius:3px"></div>
<div class="a" style="left:1129px;top:427.5px;width:67.5px;height:28px;border:1.5px solid #cfcfcf;border-radius:3px;background:#424242"></div>
<div class="t" style="left:1142px;top:437px;font-size:11px;color:#e8e8e8;font-weight:400;letter-spacing:0.1px;-webkit-text-stroke:0.2px #e8e8e8;">Enabled</div>
<div class="t" style="left:1208px;top:437px;font-size:11px;color:#bdbdbd;font-weight:400;letter-spacing:0.15px;-webkit-text-stroke:0.2px #bdbdbd;">Disabled</div>
<div class="t" style="left:1368px;width:50px;text-align:right;top:435px;font-size:13px;color:#e6e6e6;letter-spacing:-0.2px">1.0.0</div>
<svg class="a" style="left:1452px;top:434px" width="19" height="15" viewBox="0 0 19 15"><path d="M2.2 6.4C4.6 3.2 7.6 2.2 9.6 4L17.2 11.6" fill="none" stroke="#fff" stroke-width="1.9" stroke-linecap="round"/><path d="M2.2 12.4L8.7 7.4l2.9 2.1 5.7-6.4" fill="none" stroke="#fff" stroke-width="1.9" stroke-linecap="round" stroke-linejoin="round"/></svg>
<svg class="a" style="left:1489px;top:434.4px" width="14" height="16" viewBox="0 0 14 16"><path d="M4.3 0.3h5.4l.6 1.4h3.3v2.4H0.4V1.7h3.3zM1.2 4.9h11.6l-.7 9.6c-.1.8-.6 1.2-1.4 1.2H3.3c-.8 0-1.3-.4-1.4-1.2z" fill="#fff"/><path d="M5.4 6.8v6.8M8.6 6.8v6.8" stroke="#212121" stroke-width="1.4"/></svg>
<div class="t" style="left:301px;top:1055px;font-size:13.5px;color:#dcdcdc;font-weight:400;letter-spacing:-0.3px;-webkit-text-stroke:0.2px #dcdcdc;">Show</div>
<div class="a" style="left:341px;top:1047px;width:96px;height:27px;border-radius:3px;background:#2b2b2b"></div>
<div class="t" style="left:352px;top:1055px;font-size:13.5px;color:#6e6e6e;font-weight:400;letter-spacing:-0.2px;-webkit-text-stroke:0.2px #6e6e6e;">8 items</div>
<svg class="a" style="left:414.5px;top:1058px" width="9" height="6" viewBox="0 0 9 6"><path d="M0.5 0.8h8L4.5 5z" fill="#6e6e6e"/></svg>
<div class="t" style="left:445px;top:1055px;font-size:13.5px;color:#dcdcdc;font-weight:400;letter-spacing:-0.3px;-webkit-text-stroke:0.2px #dcdcdc;">per page</div>
<div class="t" style="left:1213.7px;top:1054px;font-size:13.5px;color:#c8c8c8;font-weight:400;letter-spacing:-0.2px;-webkit-text-stroke:0.2px #c8c8c8;">Showing 1 to 3 items of 3</div>
<svg class="a" style="left:1382.5px;top:1055px" width="13" height="12" viewBox="0 0 13 12"><path d="M6 1.5L1.8 6 6 10.5M11.5 1.5L7.3 6l4.2 4.5" fill="none" stroke="#a8a8a8" stroke-width="1.5"/></svg>
<svg class="a" style="left:1415px;top:1055px" width="9" height="12" viewBox="0 0 9 12"><path d="M7 1.5L2.8 6 7 10.5" fill="none" stroke="#a8a8a8" stroke-width="1.5"/></svg>
<div class="t" style="left:1447.5px;top:1054px;font-size:13px;color:#ffffff;font-weight:700;letter-spacing:0px;">1</div>
<svg class="a" style="left:1476.5px;top:1055px" width="9" height="12" viewBox="0 0 9 12"><path d="M2 1.5L6.2 6 2 10.5" fill="none" stroke="#a8a8a8" stroke-width="1.5"/></svg>
<svg class="a" style="left:1505px;top:1055px" width="13" height="12" viewBox="0 0 13 12"><path d="M1.5 1.5L5.7 6 1.5 10.5M7 1.5L11.2 6 7 10.5" fill="none" stroke="#a8a8a8" stroke-width="1.5"/></svg>
</div>
</body></html>
